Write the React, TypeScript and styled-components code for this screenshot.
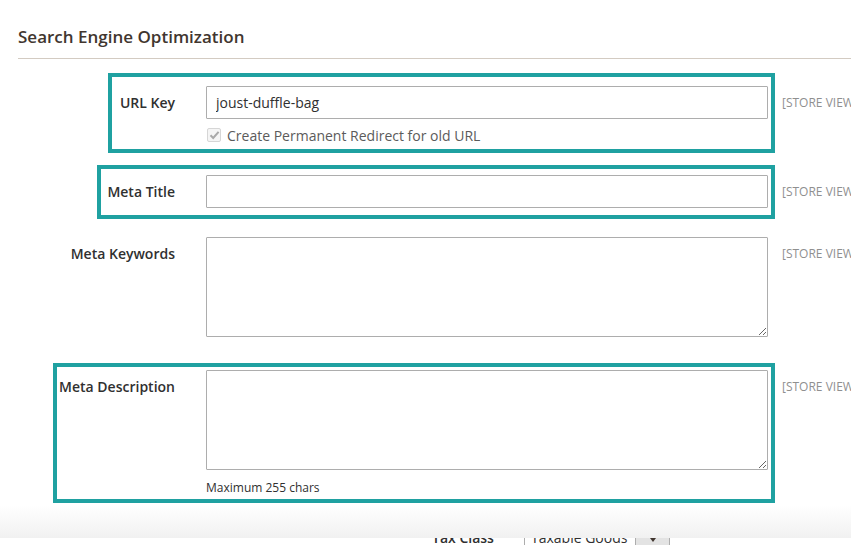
import React from 'react';
import styled, { createGlobalStyle } from 'styled-components';

const GlobalStyle = createGlobalStyle`
  html, body {
    margin: 0;
    padding: 0;
    background: #fff;
    overflow: hidden;
  }
  body {
    font-family: "Open Sans", "Liberation Sans", Arial, sans-serif;
    color: #303030;
  }
`;

const Page = styled.div`
  width: 851px;
  height: 545px;
  overflow: hidden;
  background: #fff;
`;

const Section = styled.section`
  padding-left: 18px;
`;

const Title = styled.h2`
  margin: 0;
  padding: 26px 0 10px;
  font-size: 17px;
  line-height: 22px;
  font-weight: 600;
  color: #41362f;
  border-bottom: 1px solid #d3cbc2;
`;

const Rows = styled.div`
  padding-top: 27px;
`;

const Row = styled.div<{ $top?: number }>`
  position: relative;
  display: grid;
  grid-template-columns: 188px 562px 1fr;
  align-items: start;
  margin-top: ${(p) => p.$top ?? 0}px;
`;

const Label = styled.label`
  padding-right: 31px;
  text-align: right;
  font-size: 14px;
  font-weight: 600;
  line-height: 33px;
  color: #303030;
  white-space: nowrap;
`;

const Control = styled.div`
  display: flex;
  flex-direction: column;
`;

const TextInput = styled.input`
  box-sizing: border-box;
  width: 562px;
  height: 33px;
  margin: 0;
  padding: 0 9px;
  border: 1px solid #adadad;
  border-radius: 1px;
  font-family: inherit;
  font-size: 14px;
  color: #303030;
  background: #fff;
  outline: none;
`;

const TextArea = styled.textarea`
  box-sizing: border-box;
  display: block;
  width: 562px;
  height: 100px;
  margin: 0;
  padding: 6px 9px;
  border: 1px solid #adadad;
  border-radius: 1px;
  font-family: inherit;
  font-size: 14px;
  resize: vertical;
  background: #fff;
  outline: none;
`;

const CheckRow = styled.div`
  display: flex;
  align-items: center;
  gap: 6px;
  height: 20px;
  margin-top: 6px;
  padding-left: 1px;
  font-size: 14px;
  color: #5b5b5b;
`;

const CheckBox = styled.span`
  box-sizing: border-box;
  display: inline-flex;
  align-items: center;
  justify-content: center;
  width: 14px;
  height: 14px;
  border: 1px solid #d6d6d6;
  border-radius: 2px;
  background: #f5f5f5;
`;

const Note = styled.div`
  margin-top: 10px;
  font-size: 12px;
  line-height: 16px;
  color: #303030;
`;

const Scope = styled.div`
  padding-left: 14px;
  font-size: 12px;
  line-height: 33px;
  color: #8f8f8f;
  text-transform: uppercase;
  white-space: nowrap;
`;

const Highlight = styled.div<{ $left: number; $top: number; $w: number; $h: number }>`
  position: absolute;
  left: ${(p) => p.$left}px;
  top: ${(p) => p.$top}px;
  width: ${(p) => p.$w}px;
  height: ${(p) => p.$h}px;
  box-sizing: border-box;
  border: 4px solid #1fa1a1;
  pointer-events: none;
`;

const Fade = styled.div`
  height: 33px;
  margin-top: 9px;
  background: linear-gradient(to bottom, #ffffff 0%, #f1f1f1 100%);
`;

const Clip = styled.div`
  height: 7px;
  overflow: hidden;
`;

const TaxRow = styled.div`
  display: flex;
  align-items: center;
  height: 33px;
  margin-top: -17px;
  padding-left: 432px;
`;

const TaxLabel = styled.span`
  width: 92px;
  font-size: 14px;
  font-weight: 600;
  color: #303030;
`;

const Select = styled.div`
  box-sizing: border-box;
  display: flex;
  align-items: center;
  width: 146px;
  height: 33px;
  border: 1px solid #adadad;
  font-size: 14px;
  color: #303030;
`;

const SelectText = styled.span`
  flex: 1;
  padding-left: 6px;
`;

const SelectButton = styled.span`
  display: flex;
  align-items: center;
  justify-content: center;
  width: 33px;
  height: 100%;
  border-left: 1px solid #adadad;
  background: #e3e3e3;
`;

function Check() {
  return (
    <svg width="11" height="10" viewBox="0 0 11 10">
      <path d="M1.5 5.2 L4.2 8 L9.6 1.8" fill="none" stroke="#a9a9a9" strokeWidth="2" />
    </svg>
  );
}

function Caret() {
  return (
    <svg width="12" height="8" viewBox="0 0 12 8">
      <path d="M0 0 H12 L6 8 Z" fill="#41362f" />
    </svg>
  );
}

export default function App() {
  return (
    <Page>
      <GlobalStyle />
      <Section>
        <Title>Search Engine Optimization</Title>
        <Rows>
          <Row>
            <Highlight $left={90} $top={-13} $w={667} $h={80} />
            <Label>URL Key</Label>
            <Control>
              <TextInput defaultValue="joust-duffle-bag" />
              <CheckRow>
                <CheckBox>
                  <Check />
                </CheckBox>
                Create Permanent Redirect for old URL
              </CheckRow>
            </Control>
            <Scope>[Store View]</Scope>
          </Row>
          <Row $top={30}>
            <Highlight $left={79} $top={-10} $w={678} $h={54} />
            <Label>Meta Title</Label>
            <Control>
              <TextInput />
            </Control>
            <Scope>[Store View]</Scope>
          </Row>
          <Row $top={29}>
            <Label>Meta Keywords</Label>
            <Control>
              <TextArea />
            </Control>
            <Scope>[Store View]</Scope>
          </Row>
          <Row $top={33}>
            <Highlight $left={35} $top={-7} $w={722} $h={140} />
            <Label>Meta Description</Label>
            <Control>
              <TextArea />
              <Note>Maximum 255 chars</Note>
            </Control>
            <Scope>[Store View]</Scope>
          </Row>
        </Rows>
      </Section>
      <Fade />
      <Clip>
        <TaxRow>
          <TaxLabel>Tax Class</TaxLabel>
          <Select>
            <SelectText>Taxable Goods</SelectText>
            <SelectButton>
              <Caret />
            </SelectButton>
          </Select>
        </TaxRow>
      </Clip>
    </Page>
  );
}
